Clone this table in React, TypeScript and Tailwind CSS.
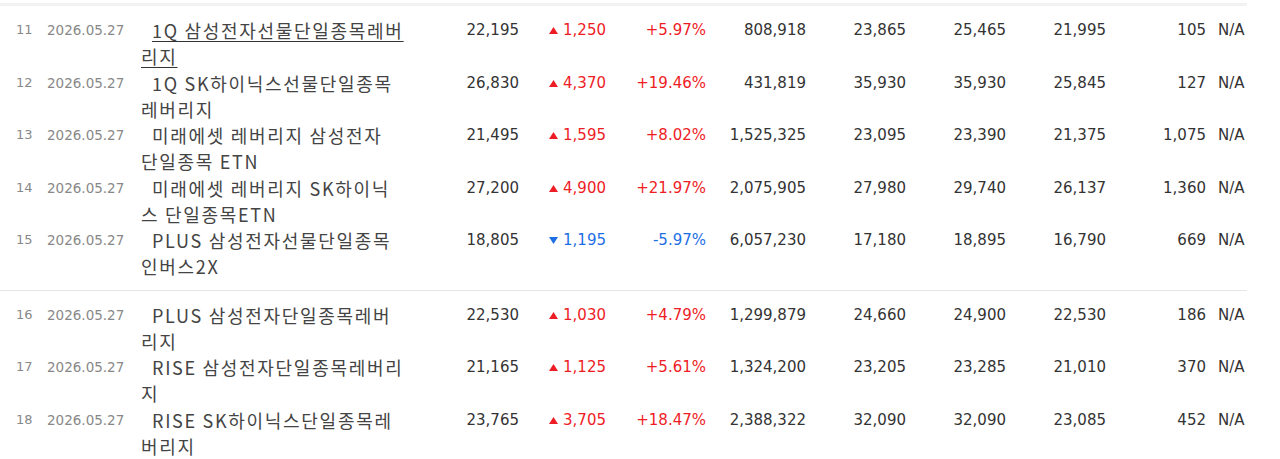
type Row = {
  no: number;
  date: string;
  name: [string, string];
  price: string;
  change: string;
  up: boolean;
  rate: string;
  volume: string;
  open: string;
  high: string;
  low: string;
  count: string;
  hover?: boolean;
};

const groupA: Row[] = [
  { no: 11, date: '2026.05.27', name: ['1Q 삼성전자선물단일종목레버', '리지'], price: '22,195', change: '1,250', up: true, rate: '+5.97%', volume: '808,918', open: '23,865', high: '25,465', low: '21,995', count: '105', hover: true },
  { no: 12, date: '2026.05.27', name: ['1Q SK하이닉스선물단일종목', '레버리지'], price: '26,830', change: '4,370', up: true, rate: '+19.46%', volume: '431,819', open: '35,930', high: '35,930', low: '25,845', count: '127' },
  { no: 13, date: '2026.05.27', name: ['미래에셋 레버리지 삼성전자', '단일종목 ETN'], price: '21,495', change: '1,595', up: true, rate: '+8.02%', volume: '1,525,325', open: '23,095', high: '23,390', low: '21,375', count: '1,075' },
  { no: 14, date: '2026.05.27', name: ['미래에셋 레버리지 SK하이닉', '스 단일종목ETN'], price: '27,200', change: '4,900', up: true, rate: '+21.97%', volume: '2,075,905', open: '27,980', high: '29,740', low: '26,137', count: '1,360' },
  { no: 15, date: '2026.05.27', name: ['PLUS 삼성전자선물단일종목', '인버스2X'], price: '18,805', change: '1,195', up: false, rate: '-5.97%', volume: '6,057,230', open: '17,180', high: '18,895', low: '16,790', count: '669' },
];

const groupB: Row[] = [
  { no: 16, date: '2026.05.27', name: ['PLUS 삼성전자단일종목레버', '리지'], price: '22,530', change: '1,030', up: true, rate: '+4.79%', volume: '1,299,879', open: '24,660', high: '24,900', low: '22,530', count: '186' },
  { no: 17, date: '2026.05.27', name: ['RISE 삼성전자단일종목레버리', '지'], price: '21,165', change: '1,125', up: true, rate: '+5.61%', volume: '1,324,200', open: '23,205', high: '23,285', low: '21,010', count: '370' },
  { no: 18, date: '2026.05.27', name: ['RISE SK하이닉스단일종목레', '버리지'], price: '23,765', change: '3,705', up: true, rate: '+18.47%', volume: '2,388,322', open: '32,090', high: '32,090', low: '23,085', count: '452' },
];

function Arrow({ up }: { up: boolean }) {
  return (
    <svg width="9" height="7" viewBox="0 0 9 7" className="inline-block align-[1px] mr-[5px]">
      {up ? (
        <polygon points="0,7 4.5,0 9,7" fill="#ee1c25" />
      ) : (
        <polygon points="0,0 9,0 4.5,7" fill="#1e6fe6" />
      )}
    </svg>
  );
}

function TableRow({ row }: { row: Row }) {
  const tone = row.up ? 'text-[#ee1c25]' : 'text-[#1e6fe6]';
  return (
    <div className="grid grid-cols-[40px_101px_278px_100px_87px_100px_100px_100px_100px_100px_100px_41px] h-[52.5px] leading-[26.25px] text-[15px] text-[#333]">
      <div className="pl-[16px] text-[13px] text-[#888]">{row.no}</div>
      <div className="pl-[7px] text-[13.5px] text-[#888]">{row.date}</div>
      <div className="indent-[11px] whitespace-nowrap text-[18px] tracking-[1.7px] font-['Noto_Sans_CJK_KR',sans-serif] text-[#444]">
        <span className={row.hover ? 'underline underline-offset-[3px] decoration-[#333]' : ''}>
          {row.name[0]}
          <br />
          {row.name[1]}
        </span>
      </div>
      <div className="text-right">{row.price}</div>
      <div className={`text-right ${tone}`}>
        <Arrow up={row.up} />
        {row.change}
      </div>
      <div className={`text-right ${tone}`}>{row.rate}</div>
      <div className="text-right">{row.volume}</div>
      <div className="text-right">{row.open}</div>
      <div className="text-right">{row.high}</div>
      <div className="text-right">{row.low}</div>
      <div className="text-right">{row.count}</div>
      <div className="pl-[12px]">N/A</div>
    </div>
  );
}

export default function App() {
  return (
    <div className="w-[1280px] h-[459px] overflow-hidden bg-white pt-[3px] font-['DejaVu_Sans','Noto_Sans_CJK_KR',sans-serif]">
      <div className="w-[1247px]">
        <div className="border-t-[3px] border-[#f2f2f2] pt-[11px] pb-[10px]">
          {groupA.map((row) => (
            <TableRow key={row.no} row={row} />
          ))}
        </div>
        <div className="border-t border-[#e6e6e6] pt-[11px]">
          {groupB.map((row) => (
            <TableRow key={row.no} row={row} />
          ))}
        </div>
      </div>
    </div>
  );
}
